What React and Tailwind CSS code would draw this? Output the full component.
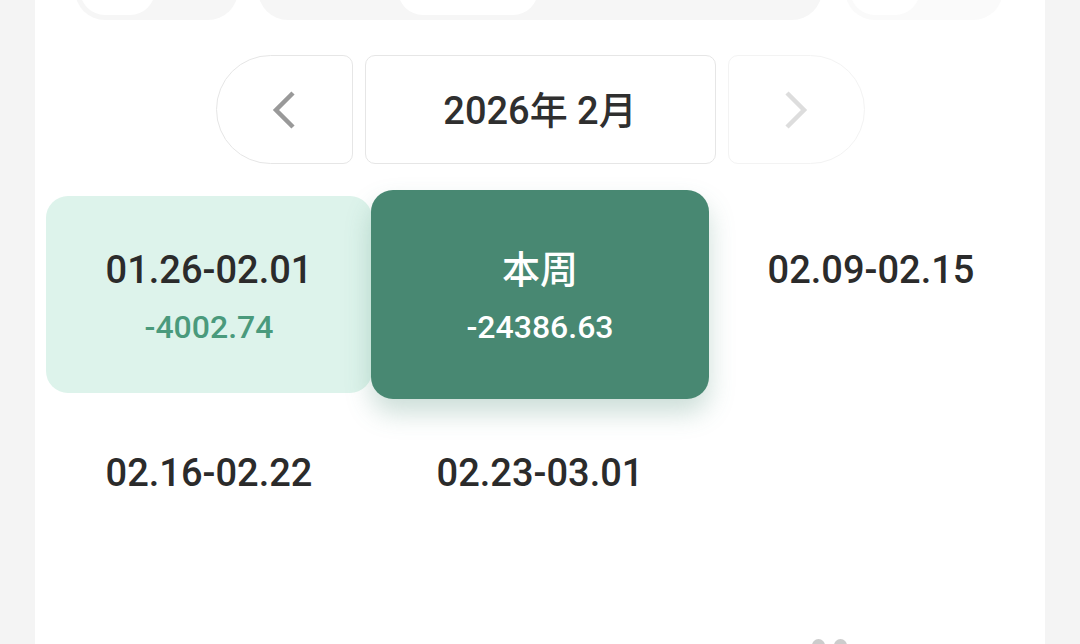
import React from 'react';

const weeks = [
  { label: '01.26-02.01', amount: '-4002.74', state: 'past' },
  { label: '本周', amount: '-24386.63', state: 'current' },
  { label: '02.09-02.15' },
  { label: '02.16-02.22' },
  { label: '02.23-03.01' },
];

function Chevron({ dir = 'left', className }) {
  return (
    <svg width="26" height="38" viewBox="0 0 26 38" className={className} fill="none">
      <path
        d={dir === 'left' ? 'M22 2 L5 19 L22 36' : 'M4 2 L21 19 L4 36'}
        stroke="currentColor"
        strokeWidth="4.5"
        strokeLinecap="butt"
        strokeLinejoin="miter"
      />
    </svg>
  );
}

function WeekCell({ week }) {
  if (week.state === 'current') {
    return (
      <div className="-m-[6px] flex flex-col items-center rounded-[22px] bg-[#488872] pt-[57px] shadow-[0_14px_26px_rgba(72,136,114,0.28)]">
        <div className="text-[38px] font-medium leading-[46px] text-white">{week.label}</div>
        <div className="mt-[13px] text-[32px] font-medium leading-[42px] text-white">{week.amount}</div>
      </div>
    );
  }
  return (
    <div
      className={
        'flex flex-col items-center rounded-[22px] pt-[51px] ' +
        (week.state === 'past' ? 'bg-[#ddf3eb]' : '')
      }
    >
      <div className="text-[38px] font-medium leading-[46px] text-[#2b2b2b]">{week.label}</div>
      {week.amount && (
        <div className="mt-[13px] text-[32px] font-medium leading-[42px] text-[#4a9a7c]">{week.amount}</div>
      )}
    </div>
  );
}

export default function App() {
  return (
    <div
      className="h-[644px] overflow-hidden bg-[#f4f4f4] px-[35px]"
      style={{ fontFamily: 'Roboto, "Noto Sans CJK SC", sans-serif' }}
    >
      <div className="flex h-full flex-col bg-white">
        {/* segmented toolbar, mostly scrolled off the top */}
        <div className="-mt-[40px] flex h-[60px] pl-[40px]">
          <div className="flex w-[163px] items-end rounded-[30px] bg-[#f6f6f6] p-[5px]">
            <div className="h-[50px] w-[75px] rounded-full bg-white" />
          </div>
          <div className="ml-[20px] flex w-[564px] items-end rounded-[30px] bg-[#f6f6f6] p-[5px] pl-[140px]">
            <div className="h-[50px] w-[140px] rounded-[25px] bg-white" />
          </div>
          <div className="ml-[23px] flex w-[158px] items-end rounded-[30px] bg-[#fafafa] p-[5px]">
            <div className="h-[50px] w-[70px] rounded-full bg-white" />
          </div>
        </div>

        {/* month switcher */}
        <div className="mt-[35px] flex h-[109px] justify-center gap-[12px]">
          <button className="flex w-[137px] items-center justify-center rounded-l-[55px] rounded-r-[10px] border border-[#e6e6e6] text-[#999]">
            <Chevron dir="left" />
          </button>
          <div className="flex w-[351px] items-center justify-center rounded-[10px] border border-[#e6e6e6] pt-[3px] text-[38px] font-medium text-[#2f2f2f]">
            2026年 2月
          </div>
          <button className="flex w-[137px] items-center justify-center rounded-l-[10px] rounded-r-[55px] border border-[#f3f3f3] text-[#dddddd]">
            <Chevron dir="right" />
          </button>
        </div>

        {/* weeks */}
        <div className="mt-[32px] grid grid-cols-3 auto-rows-[197px] gap-x-[5px] gap-y-[6px] px-[11px]">
          {weeks.map((w) => (
            <WeekCell key={w.label} week={w} />
          ))}
        </div>

        <div className="mt-auto flex h-[5px] gap-[9px] pl-[777px]">
          <div className="h-[13px] w-[13px] rounded-full bg-[#cccccc]" />
          <div className="h-[13px] w-[13px] rounded-full bg-[#cccccc]" />
        </div>
      </div>
    </div>
  );
}
